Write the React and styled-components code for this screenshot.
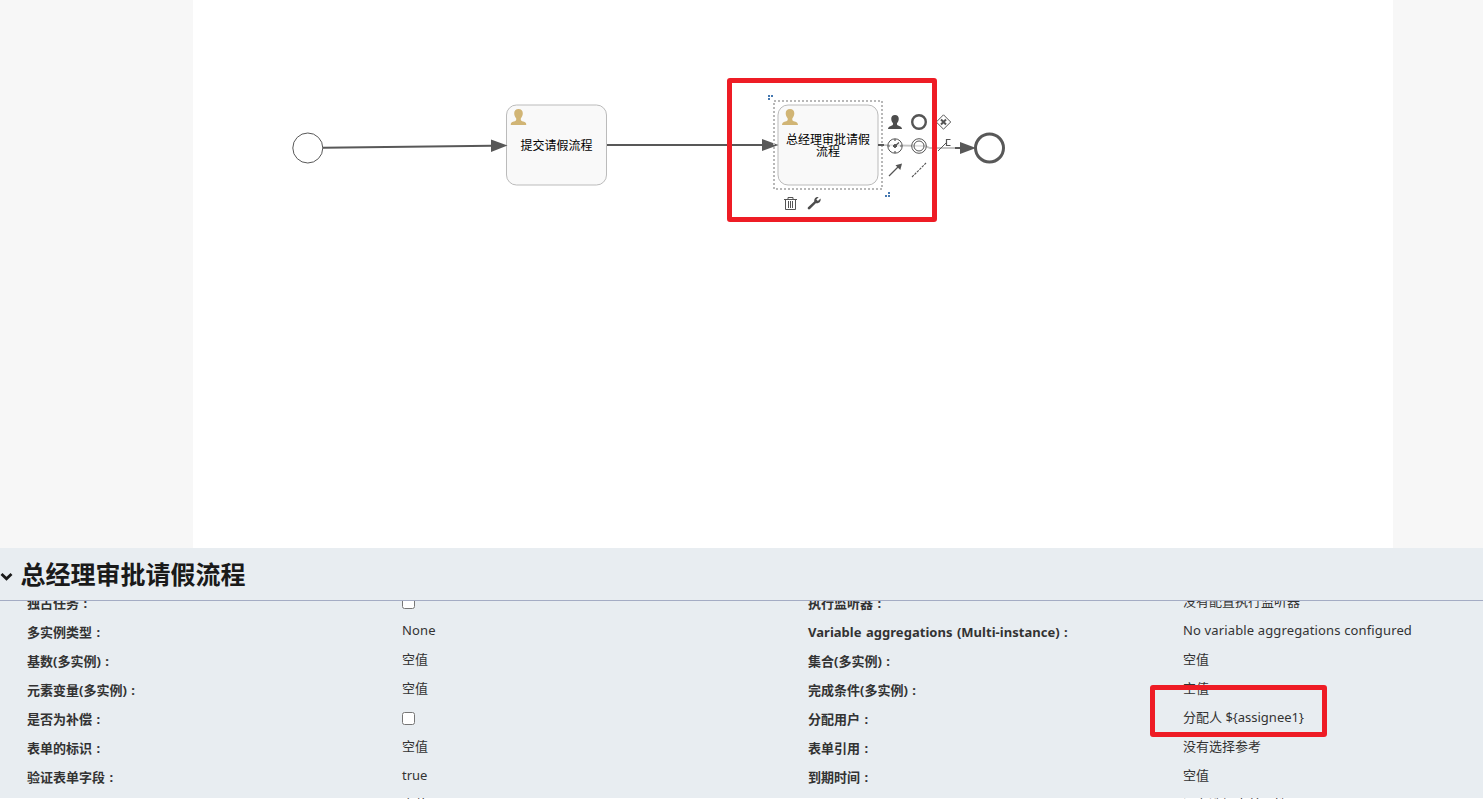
import React from "react";
import styled, { createGlobalStyle } from "styled-components";

const GlobalStyle = createGlobalStyle`
  * { box-sizing: border-box; }
  body { margin: 0; background: #fff; overflow: hidden; font-family: "Noto Sans", "Noto Sans CJK SC", sans-serif; }
`;

const Page = styled.div`
  display: flex;
  flex-direction: column;
  position: relative;
  width: 1483px;
  height: 799px;
`;

const Workspace = styled.div`
  display: flex;
  justify-content: center;
  height: 548px;
  padding: 0 90px 0 193px;
  background: #f7f7f7;
`;

const Canvas = styled.div`
  flex: 1;
  background: #fff;
`;

const Diagram = styled.svg`
  display: block;
  width: 1200px;
  height: 548px;
  text {
    font-family: "Noto Sans CJK SC", sans-serif;
    font-size: 12px;
    fill: #000;
    text-anchor: middle;
  }
`;

const Panel = styled.section`
  display: flex;
  flex-direction: column;
  height: 251px;
  background: linear-gradient(#e8edf1, #e8edf1) top / 100% 250px no-repeat;
  overflow: hidden;
`;

const PanelHeader = styled.header`
  display: flex;
  align-items: flex-start;
  gap: 6.5px;
  flex: 0 0 53px;
  border-bottom: 1px solid #a4acc4;
`;

const Chevron = styled.svg`
  width: 14px;
  height: 10px;
  margin-top: 23px;
`;

const Title = styled.h1`
  margin: 0;
  color: #1a1a1a;
  font: bold 25px/50px "Noto Sans CJK SC", sans-serif;
`;

const PropertyList = styled.div`
  flex: 1;
  min-height: 0;
  overflow: hidden;
`;

const PropertyGrid = styled.div`
  display: grid;
  grid-template-columns: 375px 406px 375px 1fr;
  grid-auto-rows: 29px;
  margin-top: -12px;
  padding-left: 27px;
  color: #333;
  font-size: 13px;
`;

const isLatin = (text) => typeof text === "string" && /^[A-Z]/.test(text);

const Label = styled.div`
  font-weight: 700;
  line-height: 29px;
  white-space: pre;
  word-spacing: 1px;
  letter-spacing: ${(p) => (p.$latin ? "0.03px" : "0")};
`;

const Value = styled.div`
  line-height: ${(p) => (p.$latin ? 25 : 24)}px;
  white-space: pre;
  letter-spacing: ${(p) => (p.$latin ? "0.14px" : "0")};
`;

const Check = styled.input.attrs({ type: "checkbox" })`
  display: block;
  width: 13px;
  height: 13px;
  margin: 7px 0 0;
`;

const Highlight = styled.div`
  position: absolute;
  left: ${(p) => p.$x}px;
  top: ${(p) => p.$y}px;
  width: ${(p) => p.$w}px;
  height: ${(p) => p.$h}px;
  border: 5px solid #ee1c25;
  border-radius: 3px;
`;

const ROWS = [
  ["独占任务 :", false, "执行监听器 :", "没有配置执行监听器"],
  ["多实例类型 :", "None", "Variable aggregations (Multi-instance) :", "No variable aggregations configured"],
  ["基数(多实例) :", "空值", "集合(多实例) :", "空值"],
  ["元素变量(多实例) :", "空值", "完成条件(多实例) :", "空值"],
  ["是否为补偿 :", false, "分配用户 :", "分配人 ${assignee1}"],
  ["表单的标识 :", "空值", "表单引用 :", "没有选择参考"],
  ["验证表单字段 :", "true", "到期时间 :", "空值"],
  ["", "空值", "", "没有选择表单属性"],
];

const PERSON =
  "M8 0C5.200 0 3.700 1.700 3.700 4.300c0 2 .8 3.900 2 5.100v1.300c0 .9-.8 1.200-2.400 1.800C1 13.300.1 14 0 16h16c-.1-2-1-2.700-3.300-3.500-1.600-.6-2.400-.9-2.400-1.800V9.400c1.200-1.200 2-3.100 2-5.100C12.300 1.700 10.800 0 8 0z";

function Person({ x, y, w, h, color }) {
  return (
    <svg x={x} y={y} width={w} height={h} viewBox="0 0 16 16" preserveAspectRatio="none">
      <path d={PERSON} fill={color} />
    </svg>
  );
}

function Task({ x, lines }) {
  return (
    <g>
      <rect x={x} y="105" width="100" height="80" rx="10" fill="#f9f9f9" stroke="#bbb" />
      <Person x={x + 4} y={109} w={16} h={16} color="#d1b575" />
      {lines.map(([text, tx, ty]) => (
        <text key={text} x={tx} y={ty}>{text}</text>
      ))}
    </g>
  );
}

function Process() {
  return (
    <Diagram viewBox="193 0 1200 548">
      <circle cx="307.800" cy="148" r="15" fill="#fff" stroke="#585858" />
      <path d="M323 147.800 L492 145.800 M606 145 H763" stroke="#585858" strokeWidth="2" fill="none" />
      <Task x={506.5} lines={[["提交请假流程", 556.5, 150]]} />
      <Task x={778} lines={[["总经理审批请假", 828, 144], ["流程", 828, 156]]} />
      <path d="M491 139.500 L507.500 145.500 L491 152z M762 139 L778.500 145 L762 151z" fill="#585858" />
      <rect x="774" y="101" width="108" height="88" fill="none" stroke="#b8b8b8" strokeWidth="2" strokeDasharray="2 2" />
      <path d="M878 145 H884" stroke="#585858" strokeWidth="2" />
      <path d="M884 145.200 L925 146 L930 148 H955" stroke="#c4c4c4" strokeWidth="1.800" fill="none" />
      <path d="M955 148 H962" stroke="#585858" strokeWidth="2" />
      <path d="M960 142 L976 148 L960 154z" fill="#585858" />
      <circle cx="989.500" cy="148" r="14" fill="#fff" stroke="#585858" strokeWidth="3" />

      <path
        d="M768 95h2v2h-2zM771 95h2v2h-2zM768 98h2v2h-2zM888 192h2v2h-2zM888 195h2v2h-2zM885 195h2v2h-2z"
        fill="#4578b0"
      />

      <Person x={888} y={115} w={14} h={14} color="#4d4d4d" />
      <circle cx="919" cy="122" r="6.800" fill="#fff" stroke="#555" strokeWidth="2.400" />
      <g fill="none" stroke="#555">
        <path d="M943.500 114.800 L950.700 122 L943.500 129.200 L936.300 122z" fill="#fff" />
        <path d="M941 119.500 l5 5 M946 119.500 l-5 5" strokeWidth="2" />
        <circle cx="895" cy="146" r="7.200" fill="rgba(255,255,255,.5)" />
        <path d="M888 146h2 M900 146h2 M895 139v2 M895 151v2 M895 146 L899 142.500" strokeWidth="1.200" />
        <path d="M893 146h4 M895 144v4" strokeWidth="1.800" />
        <circle cx="919" cy="146" r="7.300" fill="rgba(255,255,255,.5)" />
        <circle cx="919" cy="146" r="5" />
        <path d="M889 176 L898 167" strokeWidth="1.300" />
        <path d="M902 163.500 L900.300 170 L895.500 165.200z" fill="#555" stroke="none" />
        <path d="M912 177 L926 163" strokeDasharray="2.500 1" strokeWidth="1.100" />
        <path d="M938 151 L946 143" strokeWidth="1" />
        <path d="M950.500 139.500 H946.500 V145.500 H950.500" strokeWidth="1.200" />
        <path d="M784 199.500 H797 M788 199 V197.500 H793 V199 M785.500 199.500 V209.500 H795.500 V199.500 M788.500 201 V208 M790.500 201 V208 M792.500 201 V208" />
      </g>
      <path
        d="M820.500 198.600 L817.900 201 L816.300 199.500 L818.700 197.100 C816.200 196.300 813.800 198.300 814.200 201.400 L808 207.200 C806.900 208.400 808.700 210.200 810 209 L815.800 203.300 C819.300 203.800 821.300 201.300 820.500 198.600z"
        fill="#4d4d4d"
      />
    </Diagram>
  );
}

export default function App() {
  return (
    <Page>
      <GlobalStyle />
      <Workspace>
        <Canvas><Process /></Canvas>
      </Workspace>
      <Panel>
        <PanelHeader>
          <Chevron viewBox="0 0 14 10">
            <path d="M1.500 3 L6.500 7.800 L11.500 3" fill="none" stroke="#1a1a1a" strokeWidth="2.800" />
          </Chevron>
          <Title>总经理审批请假流程</Title>
        </PanelHeader>
        <PropertyList>
          <PropertyGrid>
            {ROWS.map(([label, value, label2, value2], i) => (
              <React.Fragment key={i}>
                <Label>{label}</Label>
                {value === false ? <Check /> : <Value $latin={isLatin(value)}>{value}</Value>}
                <Label $latin={isLatin(label2)}>{label2}</Label>
                <Value $latin={isLatin(value2)}>{value2}</Value>
              </React.Fragment>
            ))}
          </PropertyGrid>
        </PropertyList>
      </Panel>
      <Highlight $x={727} $y={78} $w={210} $h={144} />
      <Highlight $x={1150} $y={685} $w={177} $h={52} />
    </Page>
  );
}
